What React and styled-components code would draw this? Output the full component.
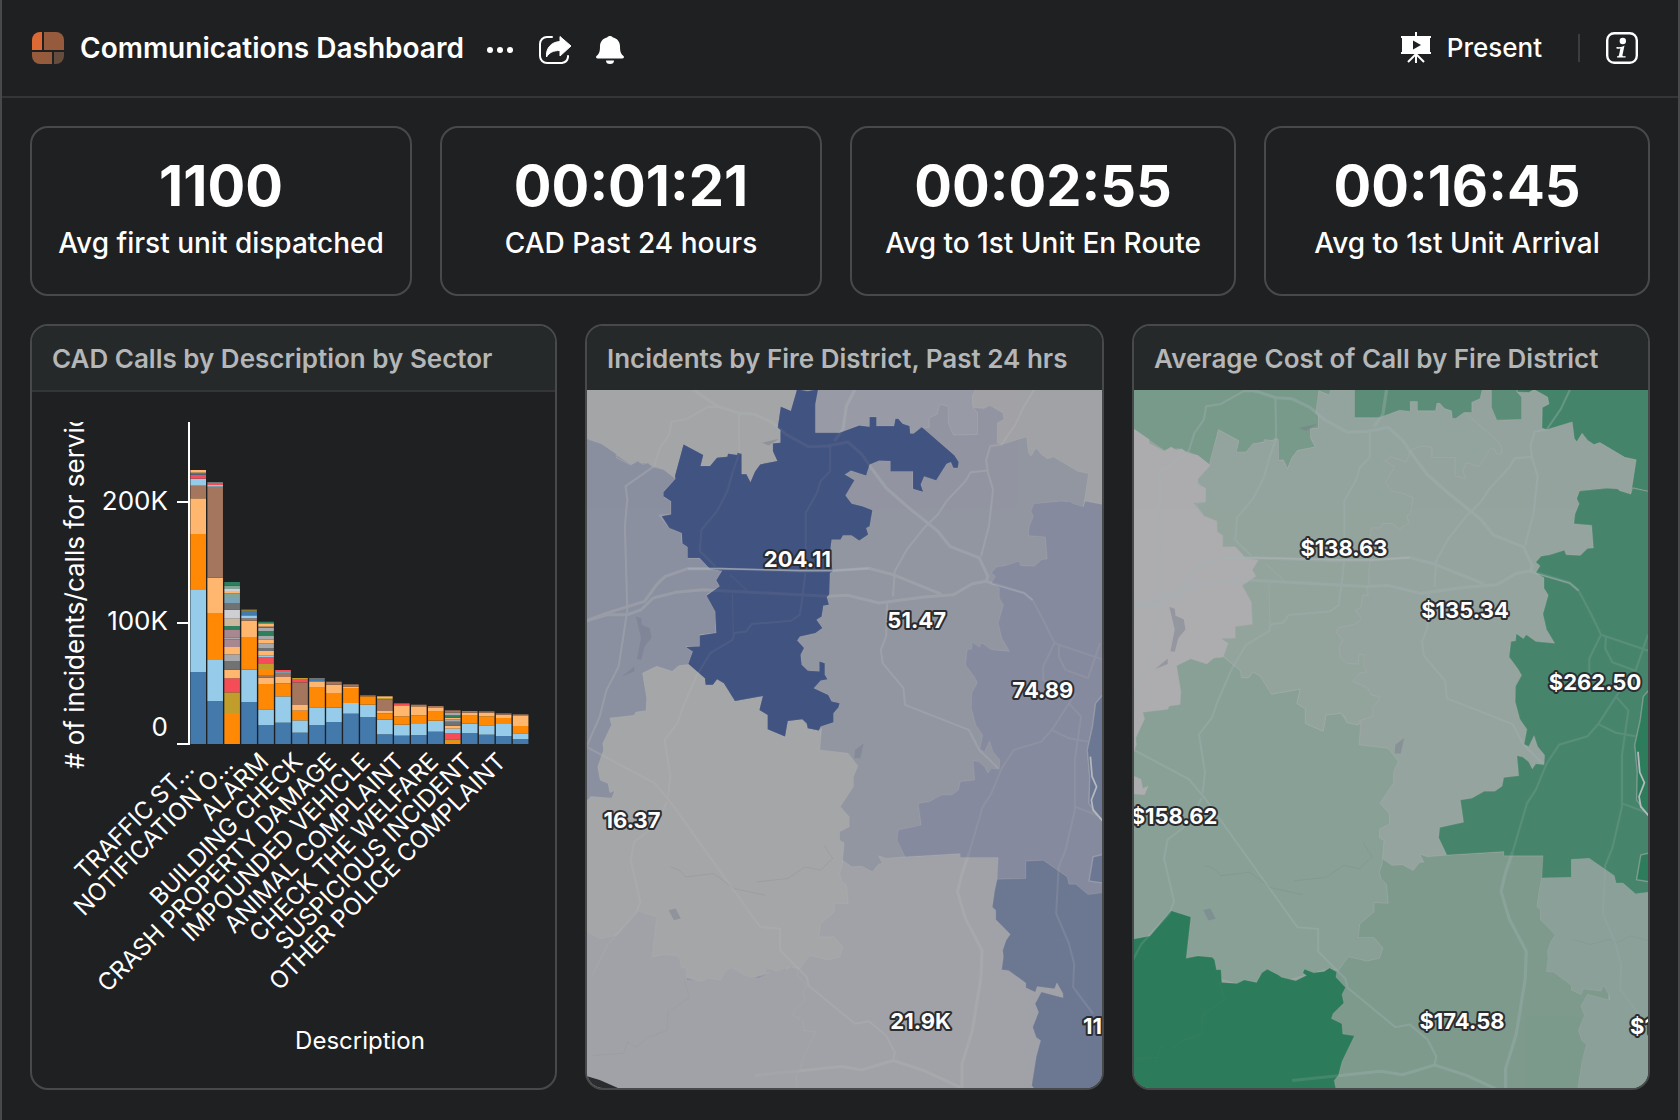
import React from "react";
import styled, { createGlobalStyle } from "styled-components";

const Global = createGlobalStyle`
  *, *::before, *::after { box-sizing: border-box; }
  body { margin: 0; background: #1f2022; color: #fff; font-family: Inter, "Liberation Sans", sans-serif; }
  h1, h2, p { margin: 0; }
`;

const Page = styled.div`
  min-height: 100vh;
  border-left: 2px solid #48494b;
  border-right: 2px solid #48494b;
`;
const Header = styled.header`
  display: flex;
  align-items: center;
  height: 98px;
  padding: 0 40px 0 30px;
  border-bottom: 2px solid #343537;
`;
const Title = styled.h1`
  margin: 0 22px 0 16px;
  font-size: 28px;
  line-height: 32px;
  font-weight: 600;
`;
const Tools = styled.div`
  display: flex;
  align-items: center;
  gap: 24px;
`;
const Right = styled(Tools)`
  margin-left: auto;
  gap: 26px;
`;
const IconButton = styled.button`
  display: flex;
  align-items: center;
  gap: 16px;
  padding: 0;
  border: 0;
  background: none;
  color: #fff;
  font: 500 26px/32px Inter, "Liberation Sans", sans-serif;
  cursor: pointer;
`;
const Divider = styled.span`
  width: 2px;
  height: 28px;
  margin-left: 10px;
  background: #3c3d3f;
`;
const Main = styled.main`
  display: grid;
  gap: 28px;
  padding: 28px;
`;
const Stats = styled.section`
  display: grid;
  grid-template-columns: 382fr 382fr 386fr 386fr;
  gap: 28px;
`;
const Stat = styled.article`
  height: 170px;
  padding: 24px 0;
  border: 2px solid #48494b;
  border-radius: 18px;
  text-align: center;
  white-space: nowrap;
`;
const StatValue = styled.p`
  font-size: 56px;
  line-height: 68px;
  font-weight: 700;
`;
const StatLabel = styled.p`
  font-size: 28px;
  line-height: 46px;
  font-weight: 500;
`;
const Panels = styled.section`
  display: grid;
  grid-template-columns: 527fr 519fr 518fr;
  gap: 28px;
`;
const Panel = styled.article`
  display: flex;
  flex-direction: column;
  min-width: 0;
  border: 2px solid #48494b;
  border-radius: 18px;
  overflow: hidden;
`;
const PanelTitle = styled.h2`
  height: ${(p) => (p.$ruled ? 66 : 64)}px;
  padding: 2px 20px 0;
  border-bottom: ${(p) => (p.$ruled ? "2px solid #343537" : "0")};
  background: #25292a;
  color: #b4b6b8;
  font-size: 26px;
  line-height: 62px;
  font-weight: 600;
  white-space: nowrap;
`;
const Drawing = styled.svg`
  display: block;
  width: 100%;
  height: ${(p) => p.$height}px;
  font-family: Inter, "Liberation Sans", sans-serif;
`;
const AxisText = styled.text`
  fill: #fff;
  font-size: ${(p) => (p.$large ? 26 : 24)}px;
`;
const MapLabel = styled.text`
  fill: #fff;
  stroke: #2b2c30;
  stroke-width: 4px;
  stroke-linejoin: round;
  paint-order: stroke;
  font-size: 22px;
  font-weight: 700;
`;

const Logo = () => (
  <svg width="32" height="32" viewBox="0 0 32 32" aria-hidden="true">
    <path d="M8 0h2v18H0V8a8 8 0 0 1 8-8Z" fill="#dd6a35" />
    <path d="M12 0h12a8 8 0 0 1 8 8v10H12Z" fill="#965b3c" />
    <path d="M0 20h20v12H8a8 8 0 0 1-8-8Z" fill="#965b3c" />
    <path d="M22 20h10v4a8 8 0 0 1-8 8h-2Z" fill="#664c3d" />
  </svg>
);
const Dots = () => (
  <svg width="28" height="32" viewBox="0 0 28 32" aria-hidden="true" fill="currentColor">
    <circle cx="4" cy="18" r="3" />
    <circle cx="14" cy="18" r="3" />
    <circle cx="24" cy="18" r="3" />
  </svg>
);
const Share = () => (
  <svg width="34" height="32" viewBox="0 0 34 32" aria-hidden="true">
    <path d="M14 5H9a7 7 0 0 0-7 7v12a7 7 0 0 0 7 7h15a7 7 0 0 0 6-6v-1" fill="none" stroke="currentColor" strokeWidth="2" strokeLinecap="round" />
    <path d="M22 4.500 33 14 22 24v-5.500C15 18.500 11.500 20.500 8.500 25c-.8-8 4-15 13.500-15.500Z" fill="currentColor" stroke="currentColor" strokeWidth="1" strokeLinejoin="round" />
  </svg>
);
const Bell = () => (
  <svg width="28" height="32" viewBox="0 0 28 32" aria-hidden="true" fill="currentColor">
    <path d="M14 4a3 3 0 0 1 3 1.500c4.500 1 7 4.500 7 9 0 5.500 1 7.500 3.500 9.500.9 1 .4 2.500-1 2.500h-25c-1.400 0-1.900-1.500-1-2.500C3 22 4 20 4 14.500c0-4.500 2.500-8 7-9A3 3 0 0 1 14 4Z" />
    <path d="M10 28.500h8a4 3.500 0 0 1-8 0Z" />
  </svg>
);
const Screen = () => (
  <svg width="30" height="32" viewBox="0 0 30 32" aria-hidden="true">
    <path d="M15 0v5M15 20v11M15 22 7 30M15 22l8 8" fill="none" stroke="currentColor" strokeWidth="2" />
    <path d="M0 4h30v2h-1v14h1v2H0v-2h1V6H0Z" fill="currentColor" />
    <path d="M12 8.500v9l8-4.500Z" fill="#1f2022" />
  </svg>
);
const Info = () => (
  <svg width="32" height="32" viewBox="0 0 32 32" aria-hidden="true">
    <rect x="1.200" y="1.200" width="29.600" height="29.600" rx="7" fill="none" stroke="currentColor" strokeWidth="2.400" />
    <circle cx="16.800" cy="9" r="3.200" fill="currentColor" />
    <path d="M10.500 15c3.500.4 5.800 0 8-1.500l-2 9.500c-.2 1.300.8 1.700 3 1v1.600h-8.500v-1.400c1.200.1 1.700-.2 2-1.200l1.400-6.400c-1.300.2-2.600.1-3.900-.2Z" fill="currentColor" />
  </svg>
);

const hues = {
  B: "#4379ab", L: "#96cbe9", O: "#ff8905", P: "#ffb66e", N: "#a3765d", R: "#f54d58",
  G: "#c19d2b", D: "#2e805c", S: "#717274", A: "#a9a9ab", K: "#a88790", C: "#ccb89f",
  W: "#cfced2", T: "#7aa3b5", E: "#83a597",
};
// Each segment is a hue letter and its upper edge, in thirds of a pixel, from the bottom up.
const bars = [
  "B636 L390 O222 P115 N77 L56 R44 B38 P30",
  "B723 L600 O459 P353 N80 L75 R69 S66",
  "O759 G697 R655 P629 S604 A583 P561 K538 A532 K510 D498 C476 W449 S429 T414 E400 P393 W387 E377 D366",
  "B726 L629 O531 P482 N475 L466 B452 G449",
  "B795 L748 O672 P653 N645 O627 G612 R591 L587 P573 S565 A550 P539 A528 D513 A503 S500 P490 D485",
  "B788 L709 O670 P651 N638 L634 R630",
  "B818 L781 O752 P735 N667 R657 G654",
  "B795 L742 O683 P664 B657 S654",
  "B786 L743 O699 P674 N665",
  "B761 L729 O684 P680 N673",
  "B771 L734 O709 N706",
  "B823 L779 O760 P753 N718 G714 P709",
  "B827 L794 O769 P736 R730",
  "B825 L792 O766 P739 N734",
  "B815 L782 O755 P742 N738",
  "O843 G838 R820 L806 P797 S785 A778 P773 D766 A758 N751",
  "B819 L791 O767 P758 N753",
  "B824 L796 O769 P758 N754",
  "B828 L792 O774 P764 N760",
  "B837 L820 O798 P766 N763",
].map((row) => row.split(" ").map((s) => [hues[s[0]], Number(s.slice(1))]));

const categories = [
  "ALARM", "BUILDING CHECK", "CRASH PROPERTY DAMAGE", "IMPOUNDED VEHICLE",
  "ANIMAL COMPLAINT", "CHECK THE WELFARE", "SUSPICIOUS INCIDENT", "OTHER POLICE COMPLAINT",
];

const Chart = () => (
  <Drawing $height={696} viewBox="0 0 523 696" role="img" aria-label="CAD calls by description by sector">
    <clipPath id="axis-clip"><rect x="0" y="30" width="100" height="400" /></clipPath>
    {bars.map((bar, i) =>
      bar.map(([fill, top], j) => {
        const bottom = j ? bar[j - 1][1] : 852;
        return <rect key={`${i}-${j}`} x={158.4 + i * 16.97} y={68 + top / 3} width="15.6" height={(bottom - top) / 3} fill={fill} />;
      })
    )}
    <path d="M145 110H157M145 231H157M145 352H157V30" fill="none" stroke="#fff" strokeWidth="2" />
    <AxisText $large x="136" y="118" textAnchor="end">200K</AxisText>
    <AxisText $large x="136" y="238" textAnchor="end">100K</AxisText>
    <AxisText $large x="136" y="344" textAnchor="end">0</AxisText>
    <g clipPath="url(#axis-clip)">
      <AxisText $large transform="translate(52 377) rotate(-90)"># of incidents/calls for service</AxisText>
    </g>
    <AxisText transform="translate(53 489) rotate(-45)">TRAFFIC ST…</AxisText>
    <AxisText transform="translate(52 525) rotate(-45)">NOTIFICATION O…</AxisText>
    {categories.map((name, i) => (
      <AxisText key={name} textAnchor="end" transform={`translate(${238 + i * 33.94} 371) rotate(-45)`}>{name}</AxisText>
    ))}
    <AxisText x="328" y="657" textAnchor="middle">Description</AxisText>
  </Drawing>
);

const districts = {
  south: "M750 1640 790 1670 820 1668 850 1685 868 1662 880 1660 868 1637 890 1645 945 1640 1105 1630 1105 1642 1215 1642 1260 1700 1400 2000 1400 2340H600V1900Z",
  northwest: "M0 240H632L616 305 585 292 583 345 576 355 584 362 584 400 562 402 562 430 575 455 525 465 510 485 497 518 485 492 471 494 470 432 430 440 400 448 380 470 352 470 360 437 303 405 278 508 245 480 190 460 150 465 108 435 65 403 0 380Z",
  west: "M0 380 65 403 108 433 108 445 150 467 170 455 185 465 200 460 212 472 245 480 280 508 245 550 248 565 267 575 267 615 232 617 262 655 298 670 298 700 315 712 315 745 350 745 380 778 415 783 398 812 408 830 370 855 395 905 398 970 350 975 350 1010 310 1010 330 1025 317 1065 290 1068 270 1085 225 1070 185 1090 197 1165 195 1203 165 1207 160 1217 90 1225 95 1245 70 1300 72 1320 55 1370 62 1410 85 1420 90 1447 105 1440 95 1465 35 1460 20 1475H0Z",
  plains: "M185 1090 225 1070 270 1085 290 1068 317 1065 365 1105 370 1125 388 1125 400 1108 420 1120 452 1173 533 1158 523 1200 547 1215 547 1258 597 1280 605 1233 647 1228 665 1255 695 1262 703 1255 698 1320 780 1330 808 1368 795 1400 795 1430 757 1490 783 1520 783 1550 755 1565 755 1590 768 1598 763 1665 755 1690 760 1710 775 1725 780 1780 740 1778 740 1805 700 1840 695 1880 740 1880 765 1910 755 1940 720 1948 668 1935 640 1975 615 1970 400 2030 0 1900V1475H20L35 1460 95 1465 105 1440 90 1447 85 1420 62 1410 55 1370 72 1320 70 1300 95 1245 90 1225 160 1217 165 1207 195 1203 197 1165Z",
  southwest: "M0 1860 28 1867 60 1885 110 1875 170 1802 225 1820 212 1940 245 1933 285 1937 292 1945 297 1973 310 1973 312 2010 355 2013 375 2003 410 2010 425 1982 440 1972 470 1988 480 1995 520 2005 550 1990 540 1982 545 1972 570 1982 600 1978 615 1968 635 1980 633 1995 660 2025 650 2045 655 2070 625 2100 620 2115 650 2130 652 2160 685 2165 650 2240 640 2280 628 2295 633 2320 625 2340H0Z",
  core: "M632 240 662 246 693 240 685 285 685 370 755 370 812 348 842 352 842 323 862 323 862 350 913 350 917 328 925 328 938 343 958 350 960 372 970 372 993 353 1088 438 1100 458 1098 475 1085 475 1078 458 1065 463 1035 512 1000 500 990 525 997 547 968 538 968 485 903 485 903 455 870 453 842 465 832 498 788 483 770 495 798 512 772 558 790 583 820 590 850 602 842 650 832 655 838 675 812 693 790 677 765 677 758 690 732 690 727 730 735 785 727 790 725 855 718 862 724 885 708 887 703 920 688 930 705 955 685 970 640 980 632 992 652 1015 642 1035 645 1065 663 1083 697 1085 697 1055 712 1060 712 1095 720 1108 700 1112 680 1135 722 1155 732 1175 755 1180 752 1192 737 1210 737 1237 700 1250 695 1262 663 1255 660 1240 647 1228 605 1233 597 1280 547 1258 547 1215 523 1200 533 1158 452 1173 420 1120 400 1108 388 1125 367 1125 365 1105 317 1062 330 1025 310 1012 350 1010 350 977 398 970 395 905 370 858 408 830 398 812 415 783 380 778 350 745 315 745 315 712 300 702 298 670 262 655 240 620 267 615 267 575 245 560 245 548 280 508 278 500 303 405 360 437 352 470 380 470 400 445 430 442 432 433 458 437 460 430 471 434 471 494 485 494 497 518 510 487 525 465 575 455 562 425 562 402 584 400 584 362 576 355 585 292 614 305Z",
  north: "M693 240H1150L1140 262 1142 295 1155 310 1155 375 1085 377 1070 340 1070 290 1045 285 1038 315 1015 325 1015 355 993 355 970 372 960 372 958 350 938 343 925 328 917 328 913 350 862 350 862 323 842 323 842 352 812 348 755 370 685 370 685 285Z",
  northeast: "M1150 240H1530V588L1467 573 1462 592 1477 492 1445 485 1375 442 1358 448 1340 435 1325 415 1310 440 1303 430 1297 382 1225 405 1212 400 1213 340 1232 330 1228 310 1190 288 1175 297 1143 295 1140 262Z",
  east: "M1530 588 1467 575 1462 592 1430 582 1425 577 1395 575 1318 583 1310 605 1317 620 1305 650 1302 678 1352 682 1357 748 1340 750 1320 770 1280 768 1275 755 1235 768 1210 772 1195 790 1207 800 1195 820 1218 835 1218 865 1230 885 1215 940 1225 985 1248 1025 1195 1020 1168 1000 1160 1012 1140 997 1138 1018 1125 1020 1120 1065 1145 1100 1155 1118 1138 1150 1137 1195 1150 1245 1170 1275 1162 1318 1175 1325 1190 1293 1200 1325 1220 1350 1218 1378 1195 1375 1185 1390 1175 1370 1158 1355 1142 1352 1147 1410 1105 1415 1100 1440 1080 1455 1050 1455 1015 1475 983 1480 992 1545 925 1560 922 1590 945 1640 1105 1630 1105 1642 1215 1642 1212 1707 1295 1705 1295 1653 1345 1650 1415 1700 1420 1722 1440 1722 1475 1753 1530 1746Z",
  southeast: "M1212 1707 1295 1705 1295 1653 1345 1650 1415 1700 1420 1722 1440 1722 1475 1753 1530 1746V2340H1325L1312 2325 1325 2240 1338 2190 1325 2180 1315 2150 1332 2105 1322 2080 1340 2045 1403 2062 1403 2050 1385 2017 1378 2035 1328 2028 1322 2045 1295 2032 1295 2018 1245 1980 1225 1978 1230 1940 1228 1920 1238 1890 1250 1872 1208 1828 1208 1800 1198 1790 1205 1740Z",
  river: "M1530 1140 1497 1180 1488 1250 1473 1320 1480 1400 1478 1480 1530 1550Z",
  bend: "M1530 1630 1490 1640 1478 1712 1530 1720Z",
};

const roads = [
  [3, "M330 240 400 290 465 312 510 315 560 340 600 375 665 412 720 410 780 398 820 435 850 480 890 535 950 590 1010 640 1040 665 1075 710 1160 745 1185 800 1180 815"],
  [2, "M410 293 375 292 310 330 268 337 262 375 235 415 218 470 135 530 140 570 133 650 140 900 130 970 115 1070 80 1140 60 1220 22 1310"],
  [2, "M463 315 465 430 445 490 430 545 400 605 355 660 350 725 395 770"],
  [2, "M728 410 728 485 700 515 690 550 657 610 657 780 648 860 640 915 615 933 500 943 485 965 450 970 445 990 380 1030 340 1100 300 1195 285 1240 248 1290 265 1400 258 1460"],
  [3, "M0 942 80 910 190 875 225 825 250 800 315 777 410 777 640 785 735 783 840 776 910 795 1050 853"],
  [3, "M0 940 80 915 140 915 180 900 215 865 280 848 360 840 720 860 780 857 870 880 1000 862 1085 855 1140 822 1180 815 1290 850 1315 872"],
  [2, "M1315 872 1350 940 1378 1000 1345 1070 1345 1110 1370 1125"],
  [3, "M800 240 775 290 765 360 740 395"],
  [2, "M1320 240 1290 290 1265 345 1225 405 1192 410 1180 450 1185 490 1200 540 1188 650 1165 740"],
  [2, "M1185 483 1135 488 1120 515 1065 575 1040 615 1000 655 950 720 915 785 910 860"],
  [2, "M893 880 890 980 875 1020 880 1060 940 1135 945 1185 1130 1260 1160 1320 1215 1375"],
  [1, "M445 850 447 970M437 795 490 845"],
  [2, "M1378 1000 1520 1050M1510 1000 1475 1105 1410 1080 1390 1040 1392 1005"],
  [2, "M1440 1150 1420 1180 1370 1260 1340 1295 1260 1320 1225 1375 1195 1450 1170 1490 1130 1630"],
  [3, "M1130 1630 1110 1690 1097 1745 1120 1825 1168 1920 1165 2000 1140 2160 1110 2260 1110 2340"],
  [2, "M1420 1180 1455 1220 1437 1350 1437 1500 1410 1620 1390 1670 1383 1810 1420 1900 1435 1960 1432 2030 1490 2110"],
  [2, "M1370 1260 1420 1285 1475 1295M1437 1490 1515 1520"],
  [2, "M20 1310 220 1420 268 1480 525 1850 583 1855 583 1920 660 2000 665 2025 800 2140 840 2132 890 2175 915 2225 910 2250"],
  [3, "M510 2295 760 2268 820 2278 910 2250 1000 2280 1105 2330"],
  [2, "M255 1475 235 1520 205 1560 160 1595 150 1650 178 1775 165 1810 85 1900 38 1995"],
];

const lakes =
  "M165 920 180 925 182 945 205 955 210 985 190 1010 180 1050 168 1048 180 985ZM125 1100 160 1070 160 1085ZM260 1800 280 1795 295 1825 275 1830ZM800 1320 825 1300 815 1345 798 1345ZM530 400 580 388 550 408Z";
const creeks =
  "M265 1670 290 1680 310 1700 390 1690 450 1735 540 1755M515 1715 605 1705 655 1670 700 1680 735 1645 710 1605M40 2235 130 2228 140 2195 165 2210 200 2180 255 2160 258 2105 320 2060 305 2010M1295 1885 1350 1900 1400 1885 1425 1895 1460 1875 1515 1890";

const bluePalette = {
  base: "#9296a1", south: "#a1a2a7", northwest: "#a4a5a7", west: "#8b90a0", plains: "#a5a6a7",
  southwest: "#a1a2a8", core: "#415380", north: "#989ca7", northeast: "#a1a2a6", east: "#868a9e",
  southeast: "#6c7893", river: "#6c7893", bend: "#6c7893",
};
const greenPalette = {
  base: "#96a49f", south: "#7d9a8d", northwest: "#789a8b", west: "#adacaf", plains: "#88a096",
  southwest: "#2d7c5b", core: "#94a49e", north: "#5c8e79", northeast: "#44856b", east: "#46866c",
  southeast: "#8aa099", river: "#2d7c5b", bend: "#7d9a8d",
};

function DistrictMap({ name, palette, view, line, road, veil, highway, labels }) {
  return (
    <Drawing $height={698} viewBox="0 0 514 698" preserveAspectRatio="xMidYMid slice" role="img" aria-label={name}>
      <rect width="514" height="698" fill={palette.base} />
      <g transform={view}>
        <g transform="translate(-8 -80) scale(.3444 .3333)">
          {Object.entries(districts).map(([id, d]) => (
            <path key={id} d={d} fill={palette[id]} stroke={line} strokeWidth="2.200" strokeLinejoin="round" />
          ))}
          <path d={lakes} fill="#71788a" opacity=".4" />
          <path d={creeks} fill="none" stroke="#777f84" strokeWidth="2" opacity=".3" />
          <g fill="none" stroke={road} strokeLinejoin="round" opacity=".35">
            {roads.map(([w, d], i) => <path key={i} d={d} strokeWidth={w * 3} />)}
          </g>
          {["core", "east", "southeast", "southwest"].map((id) => (
            <path key={id} d={districts[id]} fill={palette[id]} opacity={id === "core" ? veil : 0.45} />
          ))}
          <path d={districts.river + districts.bend} fill={palette.river} stroke={line} strokeWidth="4" />
          <path d="M315 777H410L640 783 735 783 840 776" fill="none" stroke={highway} strokeWidth="5" opacity=".8" />
          <path d="M1195 822 1290 850 1315 872" fill="none" stroke={highway} strokeWidth="4" opacity=".6" />
          <path d="M1482 1340 1487 1400 1500 1430 1485 1470 1490 1500 1520 1535" fill="none" stroke="#b4babd" strokeWidth="5" />
          <path d="M0 2290 60 2308 130 2340H0Z" fill="#2a2c2e" />
        </g>
      </g>
      {labels.map(([text, x, y, anchor]) => (
        <MapLabel key={text} x={x} y={y} textAnchor={anchor || "middle"}>{text}</MapLabel>
      ))}
    </Drawing>
  );
}

const stats = [
  ["1100", "Avg first unit dispatched"],
  ["00:01:21", "CAD Past 24 hours"],
  ["00:02:55", "Avg to 1st Unit En Route"],
  ["00:16:45", "Avg to 1st Unit Arrival"],
];

export default function App() {
  return (
    <Page>
      <Global />
      <Header>
        <Logo />
        <Title>Communications Dashboard</Title>
        <Tools>
          <IconButton aria-label="More"><Dots /></IconButton>
          <IconButton aria-label="Share"><Share /></IconButton>
          <IconButton aria-label="Notifications"><Bell /></IconButton>
        </Tools>
        <Right>
          <IconButton><Screen />Present</IconButton>
          <Divider />
          <IconButton aria-label="Information"><Info /></IconButton>
        </Right>
      </Header>
      <Main>
        <Stats>
          {stats.map(([value, label]) => (
            <Stat key={label}>
              <StatValue>{value}</StatValue>
              <StatLabel>{label}</StatLabel>
            </Stat>
          ))}
        </Stats>
        <Panels>
          <Panel>
            <PanelTitle $ruled>CAD Calls by Description by Sector</PanelTitle>
            <Chart />
          </Panel>
          <Panel>
            <PanelTitle>Incidents by Fire District, Past 24 hrs</PanelTitle>
            <DistrictMap
              name="Incidents by fire district"
              palette={bluePalette}
              view="translate(0 0)"
              line="rgba(176,178,182,.5)"
              road="#b0b4b6"
              veil={0.75}
              highway="#a3adb8"
              labels={[
                ["204.11", 210, 177], ["51.47", 329, 238], ["74.89", 455, 308],
                ["16.37", 45, 438], ["21.9K", 333, 638], ["11", 495, 643, "start"],
              ]}
            />
          </Panel>
          <Panel>
            <PanelTitle>Average Cost of Call by Fire District</PanelTitle>
            <DistrictMap
              name="Average cost of call by fire district"
              palette={greenPalette}
              view="translate(-15 -17) scale(1.033)"
              line="rgba(176,178,178,.5)"
              road="#a4b4b4"
              veil={0.1}
              highway="#a9b0b0"
              labels={[
                ["$138.63", 210, 166], ["$135.34", 331, 228], ["$262.50", 461, 300],
                ["$158.62", 40, 434], ["$174.58", 328, 639], ["$1", 496, 644, "start"],
              ]}
            />
          </Panel>
        </Panels>
      </Main>
    </Page>
  );
}
